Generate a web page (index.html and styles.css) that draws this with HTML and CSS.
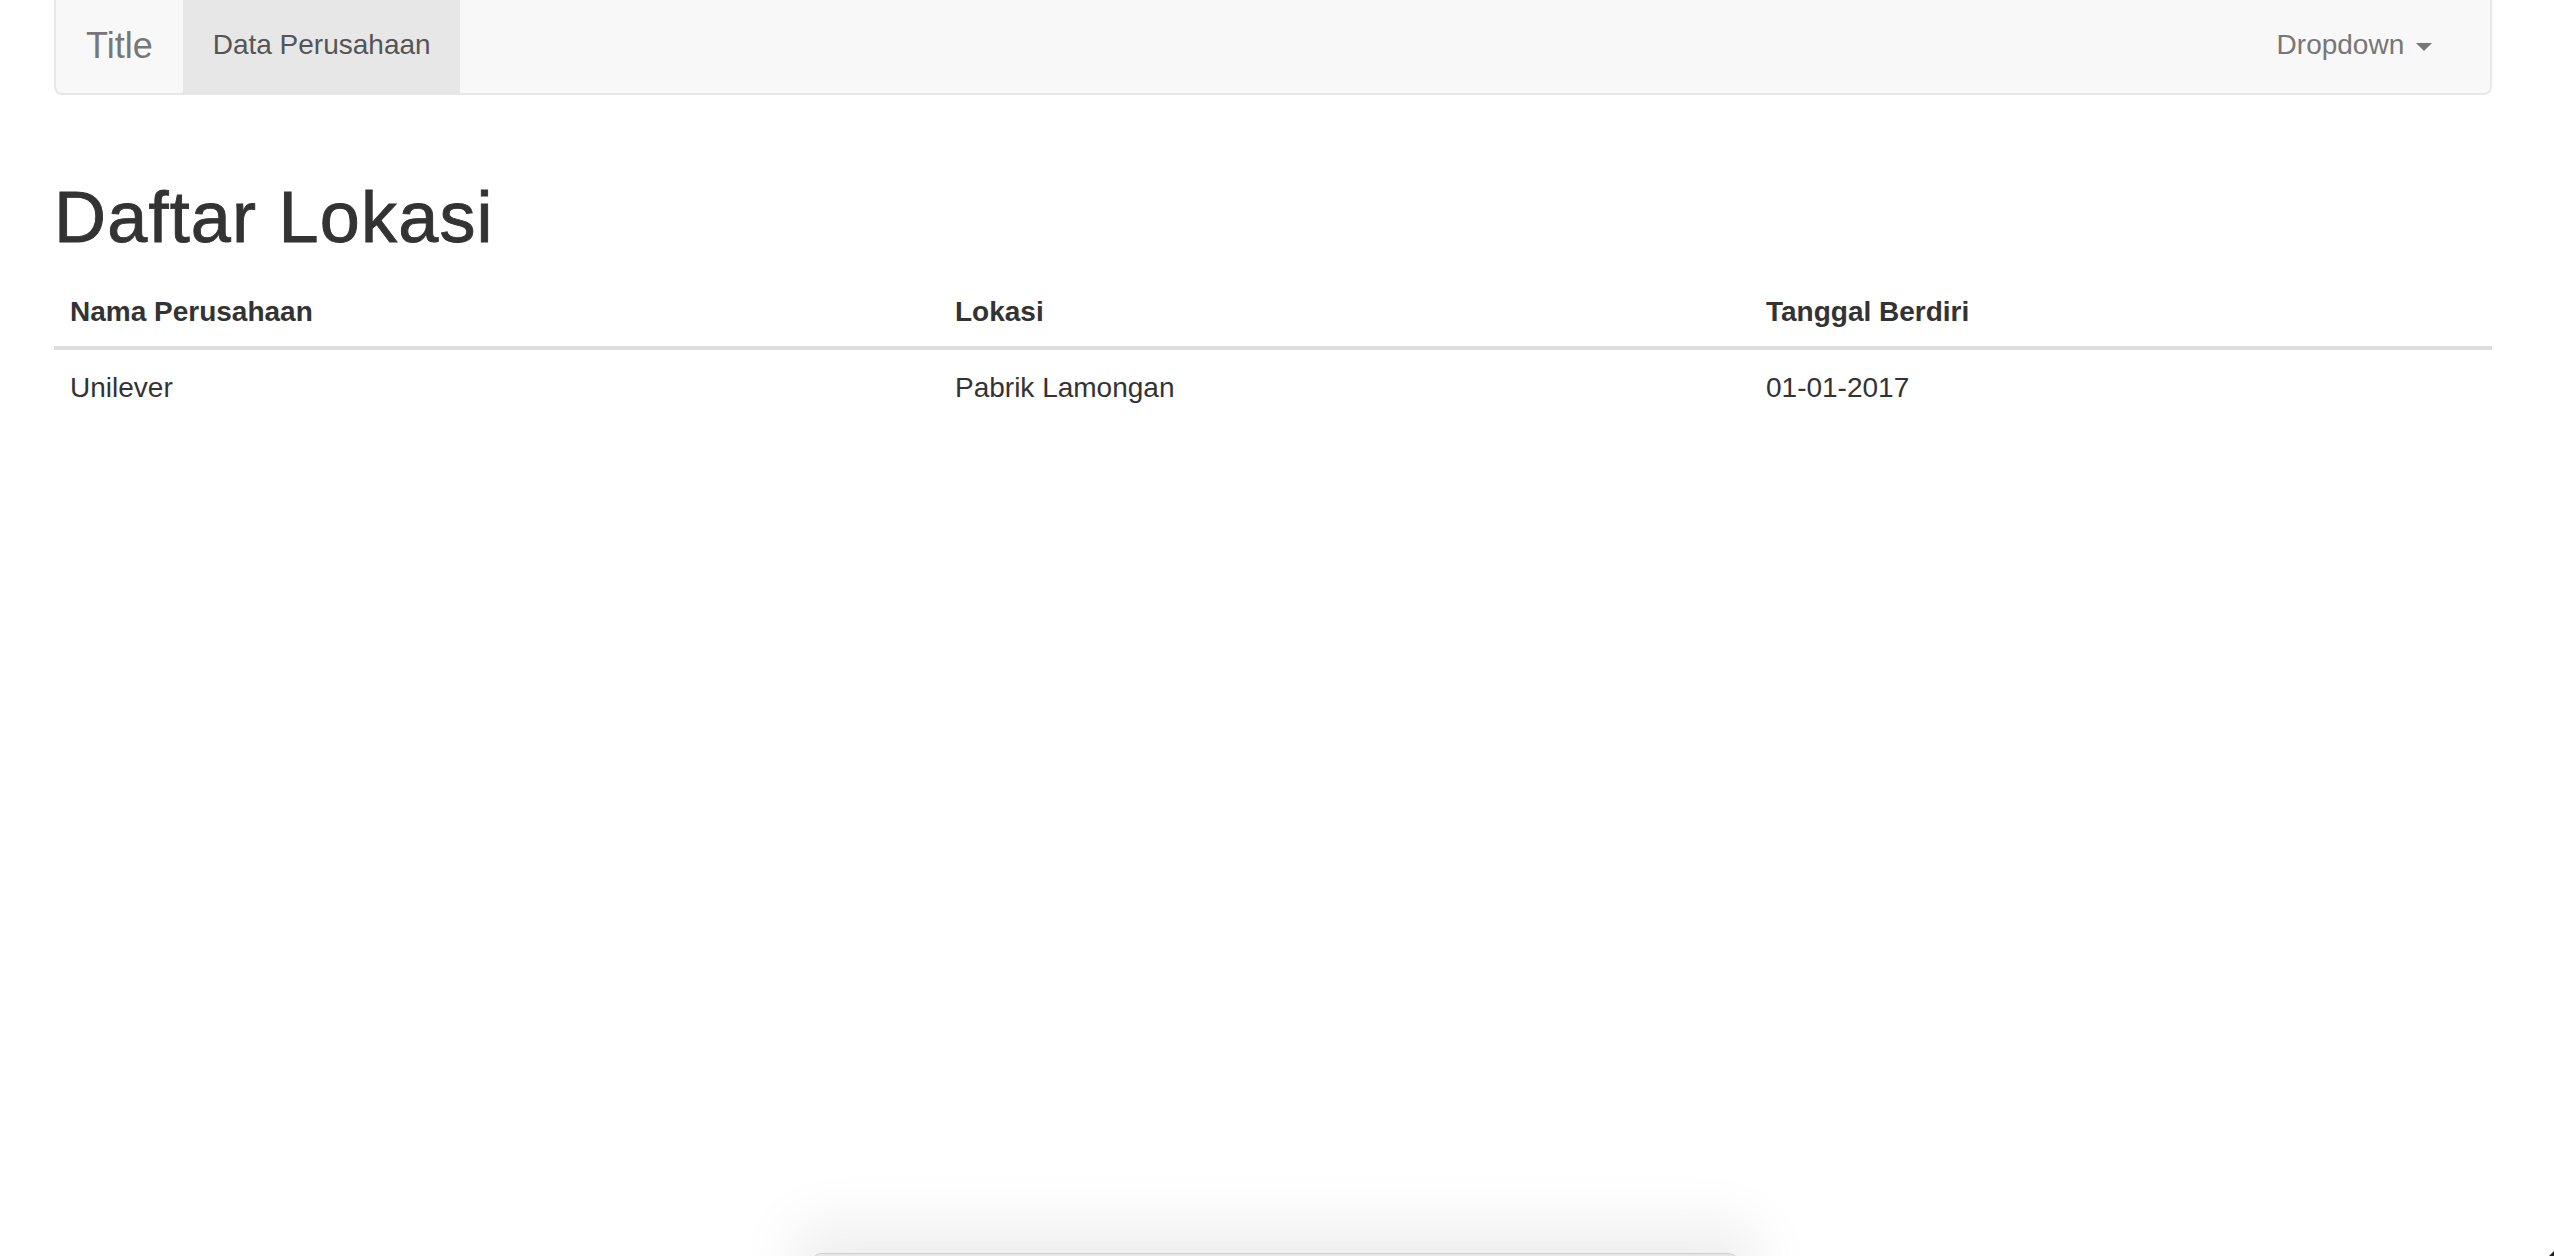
FILE: index.html
```html
<!DOCTYPE html>
<html lang="id">
<head>
<meta charset="utf-8">
<title>Daftar Lokasi</title>
<link rel="stylesheet" href="styles.css">
</head>
<body>
<div class="page">
  <nav class="navbar">
    <div class="nav-left">
      <a class="brand" href="#">Title</a>
      <a class="nav-link active" href="#">Data Perusahaan</a>
    </div>
    <div class="nav-right">
      <a class="nav-link" href="#">Dropdown <span class="caret"></span></a>
    </div>
  </nav>

  <h1 class="title">Daftar Lokasi</h1>

  <table class="table">
    <thead>
      <tr>
        <th class="c1">Nama Perusahaan</th>
        <th class="c2">Lokasi</th>
        <th class="c3">Tanggal Berdiri</th>
      </tr>
    </thead>
    <tbody>
      <tr>
        <td>Unilever</td>
        <td>Pabrik Lamongan</td>
        <td>01-01-2017</td>
      </tr>
    </tbody>
  </table>
</div>
<div class="dock-shadow"></div>
<div class="corner"></div>
</body>
</html>
```

FILE: styles.css
```css
html, body {
  margin: 0;
  padding: 0;
  background: #ffffff;
}
body {
  font-family: "Liberation Sans", Arial, sans-serif;
  color: #333333;
  width: 2554px;
  height: 1256px;
  overflow: hidden;
  position: relative;
}
.page {
  margin: 0 62px 0 54px;
}
.navbar {
  display: flex;
  justify-content: space-between;
  background: #f8f8f8;
  border: 2px solid #e7e7e7;
  border-top: 0;
  border-radius: 0 0 8px 8px;
  height: 93px;
  padding-right: 28px;
}
.nav-left, .nav-right {
  display: flex;
  align-items: stretch;
}
.brand {
  display: block;
  font-size: 36px;
  line-height: 40px;
  padding: 26px 30px 27px 30px;
  color: #777777;
  text-decoration: none;
}
.nav-link {
  display: block;
  font-size: 28px;
  line-height: 40px;
  padding: 25px 30px 28px 30px;
  color: #777777;
  text-decoration: none;
}
.nav-link.active {
  background: #e7e7e7;
  color: #555555;
  padding-right: 29px;
}
.caret {
  display: inline-block;
  width: 0;
  height: 0;
  margin-left: 4px;
  vertical-align: middle;
  border-top: 8px solid #777777;
  border-left: 8px solid transparent;
  border-right: 8px solid transparent;
}
.title {
  font-size: 72px;
  font-weight: 500;
  line-height: 1.1;
  letter-spacing: 1.2px;
  -webkit-text-stroke: 0.9px #333333;
  margin: 83px 0 17px 0;
  color: #333333;
}
.table {
  width: 100%;
  border-collapse: collapse;
  border-spacing: 0;
  table-layout: fixed;
  font-size: 28px;
  line-height: 40px;
}
.table th {
  text-align: left;
  font-weight: bold;
  padding: 18px 16px 14px 16px;
  border-bottom: 4px solid #dddddd;
}
.table td {
  padding: 18px 16px 14px 16px;
}
.c1 { width: 853px; }
.c2 { width: 779px; }
.dock-shadow {
  position: absolute;
  left: 810px;
  width: 930px;
  bottom: -40px;
  height: 42px;
  background: #e8e8e8;
  border-top: 1px solid #cfcfcf;
  box-shadow: 0 -10px 60px 20px rgba(0, 0, 0, 0.07);
  border-radius: 12px;
}
.corner {
  position: absolute;
  right: 0;
  bottom: 0;
  width: 0;
  height: 0;
  border-bottom: 5px solid #222;
  border-left: 5px solid transparent;
}
```
